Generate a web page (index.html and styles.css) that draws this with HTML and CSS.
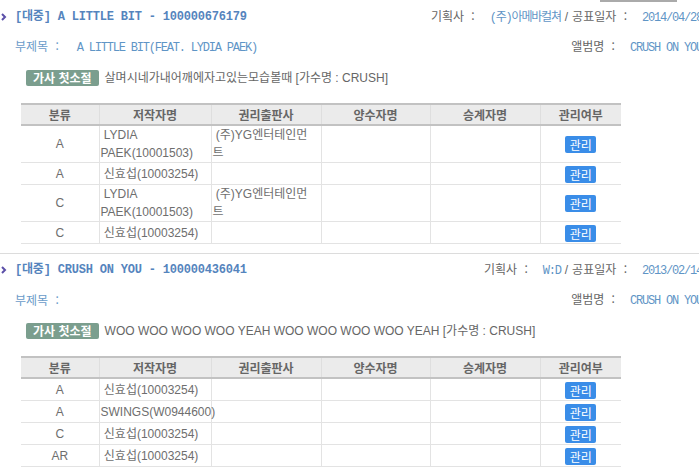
FILE: index.html
```html
<!DOCTYPE html>
<html lang="ko">
<head>
    <meta charset="UTF-8">
    <meta name="viewport" content="width=device-width, initial-scale=1.0">
    <title>저작물 권리정보</title>
    <link rel="stylesheet" href="styles.css">
</head>
<body>
    <div class="page">
        <div class="prev-bar"></div>

        <div class="work">
            <div class="work-row work-head">
                <h2 class="work-title"><svg class="arrow" width="6" height="8" viewBox="0 0 6 8"><polyline points="1,1 4,4 1,7" fill="none" stroke="#5b4fa8" stroke-width="2"/></svg>[대중] A LITTLE BIT - 100000676179</h2>
                <div class="meta"><span class="label">기획사 :</span><span class="val">(주)아메바컬쳐</span><span class="sep">/</span><span class="label">공표일자 :</span><span class="val">2014/04/28</span></div>
            </div>
            <div class="work-row work-sub">
                <div class="sub"><span class="label">부제목 :</span><span class="val wide">A LITTLE BIT(FEAT. LYDIA PAEK)</span></div>
                <div class="meta"><span class="label">앨범명 :</span><span class="val">CRUSH ON YOU</span></div>
            </div>
            <p class="lyrics"><span class="badge">가사 첫소절</span>살며시네가내어깨에자고있는모습볼때 [가수명 : CRUSH]</p>

            <table class="rights">
                <colgroup>
                    <col class="c-type"><col class="c-author"><col class="c-pub"><col class="c-buyer"><col class="c-heir"><col class="c-manage">
                </colgroup>
                <tr>
                    <th>분류</th><th>저작자명</th><th>권리출판사</th><th>양수자명</th><th>승계자명</th><th>관리여부</th>
                </tr>
                <tr>
                    <td class="center">A</td><td>&nbsp;LYDIA<br>PAEK(10001503)</td><td>&nbsp;(주)YG엔터테인먼<br>트</td><td></td><td></td><td class="center"><span class="manage-btn">관리</span></td>
                </tr>
                <tr>
                    <td class="center">A</td><td>&nbsp;신효섭(10003254)</td><td></td><td></td><td></td><td class="center"><span class="manage-btn">관리</span></td>
                </tr>
                <tr>
                    <td class="center">C</td><td>&nbsp;LYDIA<br>PAEK(10001503)</td><td>&nbsp;(주)YG엔터테인먼<br>트</td><td></td><td></td><td class="center"><span class="manage-btn">관리</span></td>
                </tr>
                <tr>
                    <td class="center">C</td><td>&nbsp;신효섭(10003254)</td><td></td><td></td><td></td><td class="center"><span class="manage-btn">관리</span></td>
                </tr>
            </table>
        </div>

        <div class="divider"></div>

        <div class="work">
            <div class="work-row work-head">
                <h2 class="work-title"><svg class="arrow" width="6" height="8" viewBox="0 0 6 8"><polyline points="1,1 4,4 1,7" fill="none" stroke="#5b4fa8" stroke-width="2"/></svg>[대중] CRUSH ON YOU - 100000436041</h2>
                <div class="meta"><span class="label">기획사 :</span><span class="val">W:D</span><span class="sep">/</span><span class="label">공표일자 :</span><span class="val">2013/02/14</span></div>
            </div>
            <div class="work-row work-sub">
                <div class="sub"><span class="label">부제목 :</span></div>
                <div class="meta"><span class="label">앨범명 :</span><span class="val">CRUSH ON YOU</span></div>
            </div>
            <p class="lyrics"><span class="badge">가사 첫소절</span>WOO WOO WOO WOO YEAH WOO WOO WOO WOO YEAH [가수명 : CRUSH]</p>

            <table class="rights">
                <colgroup>
                    <col class="c-type"><col class="c-author"><col class="c-pub"><col class="c-buyer"><col class="c-heir"><col class="c-manage">
                </colgroup>
                <tr>
                    <th>분류</th><th>저작자명</th><th>권리출판사</th><th>양수자명</th><th>승계자명</th><th>관리여부</th>
                </tr>
                <tr>
                    <td class="center">A</td><td>&nbsp;신효섭(10003254)</td><td></td><td></td><td></td><td class="center"><span class="manage-btn">관리</span></td>
                </tr>
                <tr>
                    <td class="center">A</td><td>SWINGS(W0944600)</td><td></td><td></td><td></td><td class="center"><span class="manage-btn">관리</span></td>
                </tr>
                <tr>
                    <td class="center">C</td><td>&nbsp;신효섭(10003254)</td><td></td><td></td><td></td><td class="center"><span class="manage-btn">관리</span></td>
                </tr>
                <tr>
                    <td class="center">AR</td><td>&nbsp;신효섭(10003254)</td><td></td><td></td><td></td><td class="center"><span class="manage-btn">관리</span></td>
                </tr>
            </table>
        </div>
    </div>
</body>
</html>
```

FILE: styles.css
```css
html, body {
    margin: 0;
    padding: 0;
    overflow: hidden;
    background: #fff;
}

body {
    font-family: 'Liberation Sans', 'Noto Sans CJK KR', sans-serif;
    font-size: 12px;
    color: #666;
}

.page {
    width: 702px;
}

.prev-bar {
    width: 77px;
    height: 2px;
    margin-left: 600px;
    background-color: #aaa;
}

.work-row {
    display: flex;
    justify-content: space-between;
    align-items: center;
    height: 18px;
    line-height: 18px;
    white-space: nowrap;
}

.work-head {
    margin-top: 6px;
}

.work-sub {
    margin-top: 12px;
    padding-left: 15px;
}

.work-title {
    margin: 0;
    display: flex;
    align-items: center;
    font-family: 'Liberation Mono', 'Noto Sans CJK KR', monospace;
    font-size: 12px;
    font-weight: bold;
    letter-spacing: -0.2px;
    color: #5584bd;
}

.arrow {
    margin: 0 8px 0 1px;
}

.meta {
    color: #666;
}

.label {
    font-family: 'Noto Sans CJK KR', sans-serif;
    font-size: 12px;
    word-spacing: 4px;
    color: #666;
}

.sub .label {
    color: #6a9bc9;
}

.sep {
    padding: 0 4px;
    color: #666;
}

.val {
    font-family: 'Liberation Mono', 'Noto Sans CJK KR', monospace;
    font-size: 12px;
    letter-spacing: -1.2px;
    color: #5f95c6;
    margin-left: 15px;
}

.meta .val:first-of-type {
    margin-left: 17px;
}

.val.wide {
    margin-left: 18px;
}

.lyrics {
    margin: 13px 0 0 26px;
    height: 18px;
    line-height: 18px;
    display: flex;
    align-items: center;
    font-size: 12px;
    color: #666;
    white-space: nowrap;
}

.badge {
    display: inline-block;
    height: 16px;
    line-height: 16px;
    padding: 0 7px;
    margin-right: 6px;
    background-color: #7b9e8e;
    color: #fff;
    font-family: 'Noto Sans CJK KR', sans-serif;
    font-weight: bold;
    font-size: 12px;
    border-radius: 2px;
}

.rights {
    margin: 16px 0 0 21px;
    width: 600px;
    border-collapse: collapse;
    table-layout: fixed;
}

.c-type { width: 78px; }
.c-author { width: 112px; }
.c-pub { width: 110px; }
.c-buyer { width: 109px; }
.c-heir { width: 110px; }
.c-manage { width: 81px; }

.rights th {
    height: 19px;
    padding: 0;
    background-color: #ebebeb;
    border-top: 2px solid #c2c2c2;
    border-bottom: 2px solid #c2c2c2;
    border-left: 1px solid #dedede;
    color: #666;
    font-family: 'Noto Sans CJK KR', sans-serif;
    font-size: 12px;
    font-weight: bold;
    line-height: 19px;
}

.rights td {
    height: 21px;
    padding: 0 1px;
    border-top: 1px solid #e3e3e3;
    border-bottom: 1px solid #e3e3e3;
    border-left: 1px solid #e3e3e3;
    line-height: 18px;
    color: #6e6e6e;
    vertical-align: middle;
    white-space: nowrap;
}

.rights th:first-child,
.rights td:first-child {
    border-left: none;
}

.rights td.center {
    text-align: center;
}

.manage-btn {
    display: inline-block;
    width: 31px;
    height: 17px;
    line-height: 17px;
    background-color: #3a8de8;
    color: #fff;
    border-radius: 2px;
    font-family: 'Noto Sans CJK KR', sans-serif;
    font-size: 12px;
    vertical-align: middle;
}

.divider {
    height: 1px;
    margin-top: 9px;
    background-color: #dcdcdc;
}

.divider + .work .work-head {
    margin-top: 7px;
}
```
